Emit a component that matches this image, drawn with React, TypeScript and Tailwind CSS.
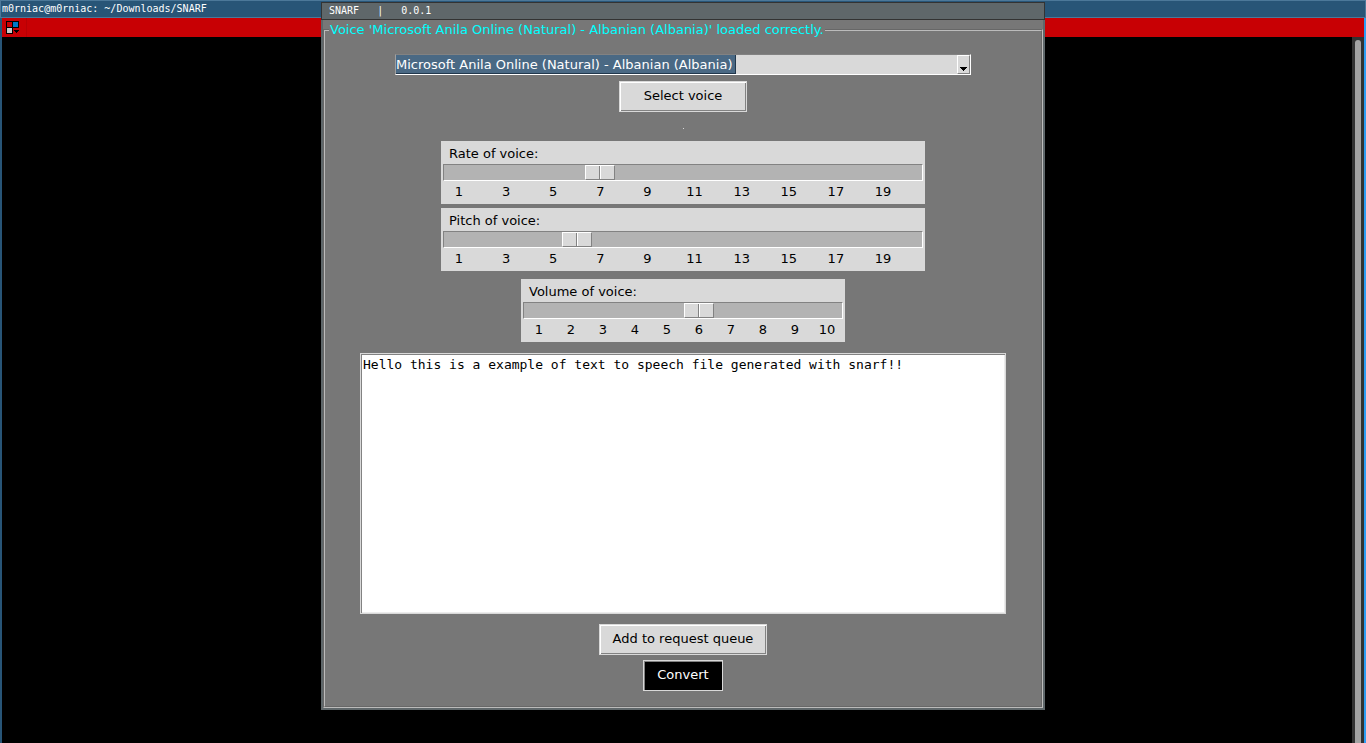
import { useState } from "react";
import type { ReactNode } from "react";

const VOICE = "Microsoft Anila Online (Natural) - Albanian (Albania)";

const RANGE =
  "block h-[17px] w-full appearance-none border border-t-[#828282] border-l-[#828282] border-r-white border-b-white bg-[#b3b3b3] outline-none " +
  "[&::-webkit-slider-thumb]:h-[15px] [&::-webkit-slider-thumb]:w-[30px] [&::-webkit-slider-thumb]:appearance-none [&::-webkit-slider-thumb]:rounded-none " +
  "[&::-webkit-slider-thumb]:border [&::-webkit-slider-thumb]:border-t-white [&::-webkit-slider-thumb]:border-l-white [&::-webkit-slider-thumb]:border-r-[#828282] [&::-webkit-slider-thumb]:border-b-[#828282] " +
  "[&::-webkit-slider-thumb]:bg-[linear-gradient(90deg,#d9d9d9_13px,#828282_13px,#828282_14px,#ffffff_14px,#ffffff_15px,#d9d9d9_15px)]";

type ScaleProps = {
  id: string;
  label: string;
  max: number;
  initial: number;
  ticks: number[];
  width: string;
  tickInset: string;
};

function Scale({ id, label, max, initial, ticks, width, tickInset }: ScaleProps) {
  const [value, setValue] = useState(initial);
  return (
    <div className={`h-[63px] bg-[#d9d9d9] px-0.5 ${width}`}>
      <label htmlFor={id} className="block h-[23px] px-1.5 leading-[26px]">
        {label}
      </label>
      <input
        id={id}
        type="range"
        min={1}
        max={max}
        value={value}
        onChange={(e) => setValue(Number(e.target.value))}
        className={RANGE}
      />
      <div className={`flex justify-between pl-4 leading-[22px] ${tickInset}`}>
        {ticks.map((t) => (
          <span key={t} className="flex w-0 justify-center">
            {t}
          </span>
        ))}
      </div>
    </div>
  );
}

type PushButtonProps = { children: ReactNode; tone: "light" | "dark"; wide?: boolean };

function PushButton({ children, tone, wide = false }: PushButtonProps) {
  const look =
    tone === "light"
      ? "bg-[#d9d9d9] text-black shadow-[inset_1px_1px_#ffffff,inset_-1px_-1px_#828282]"
      : "bg-black text-white shadow-[inset_1px_1px_#828282,inset_-1px_-1px_#000000]";
  return (
    <button
      type="button"
      className={`h-[31px] border border-[#d9d9d9] pb-0.5 ${wide ? "px-6" : "px-[13px]"} ${look}`}
    >
      {children}
    </button>
  );
}

function Terminal() {
  return (
    <div className="flex min-h-screen flex-col bg-black">
      <header className="h-[18px] border border-[#4c7899] bg-[#285577] pl-px font-['DejaVu_Sans_Mono',monospace] text-[10px] leading-[15px] text-white">
        m0rniac@m0rniac: ~/Downloads/SNARF
      </header>
      <div className="flex flex-1 flex-col border-r-2 border-l-2 border-r-[#2e9ef4] border-l-[#285577]">
        <div className="flex h-[19px] bg-[#c80004]">
          <button type="button" aria-label="New terminal layout" className="w-[25px] border-r border-[#b80004] pl-1">
            <svg width="13" height="13" viewBox="0 0 13 13" shapeRendering="crispEdges">
              <path d="M0 0h13v7H7v6H0z" fill="#000" />
              <path d="M1 1h5v5H1z" fill="#c80004" />
              <path d="M7 1h5v5H7z" fill="#0078c8" />
              <path d="M1 7h5v5H1z" fill="#c8c8c8" />
              <path d="M8 9h5v1h-1v1h-1v1h-1v-1H9v-1H8z" fill="#000" />
            </svg>
          </button>
        </div>
        <div className="flex flex-1 justify-end">
          <div className="flex w-3 flex-col bg-[#323232] px-[3px] pt-[3px]">
            <div className="flex-1 rounded-t-sm bg-[#a3a3a3]" />
          </div>
        </div>
      </div>
    </div>
  );
}

function SnarfWindow() {
  const [text, setText] = useState("Hello this is a example of text to speech file generated with snarf!!");
  const odd = [1, 3, 5, 7, 9, 11, 13, 15, 17, 19];
  const all = [1, 2, 3, 4, 5, 6, 7, 8, 9, 10];
  return (
    <section className="w-[724px] max-w-full bg-[#5f676a] font-['DejaVu_Sans',sans-serif] text-[13px] text-black">
      <h1 className="h-[18px] border border-[#333333] pl-[7px] font-['DejaVu_Sans_Mono',monospace] text-[10px] leading-4 font-normal whitespace-pre text-white">
        {"SNARF   |   0.0.1"}
      </h1>
      <div className="px-0.5 pb-0.5">
        <form className="bg-[#777777]" onSubmit={(e) => e.preventDefault()}>
          <fieldset className="min-w-0 border-2 border-[#bbbbbb] px-1 pb-[15px] [border-style:groove]">
            <legend className="h-[19px] px-px leading-[19px] text-[#00ffff]">
              Voice '{VOICE}' loaded correctly.
            </legend>
            <div className="flex flex-col items-center pt-[15px]">
              <div className="flex h-[21px] w-[576px] max-w-full border border-t-[#828282] border-r-white border-b-white border-l-[#a0a0a0] bg-[#d9d9d9]">
                <select
                  aria-label="Voice"
                  className="appearance-none border-r border-b border-[#21374c] bg-[#4a6984] pt-px pr-0.5 leading-[18px] text-white outline-none"
                >
                  <option>{VOICE}</option>
                </select>
                <span className="ml-auto flex w-[13px] items-end justify-center border border-t-white border-r-[#828282] border-b-[#828282] border-l-white pb-0.5">
                  <svg width="7" height="4" viewBox="0 0 7 4" shapeRendering="crispEdges">
                    <path d="M0 0h7v1H6v1H5v1H4v1H3V3H2V2H1V1H0z" fill="#000" />
                  </svg>
                </span>
              </div>
              <div className="mt-1.5 flex">
                <PushButton tone="light" wide>
                  Select voice
                </PushButton>
              </div>
              <div className="mt-4 size-px bg-[#d9d9d9]" />
              <div className="mt-3 flex flex-col gap-1">
                <Scale id="rate" label="Rate of voice:" max={20} initial={7} ticks={odd} width="w-[484px]" tickInset="pr-10" />
                <Scale id="pitch" label="Pitch of voice:" max={20} initial={6} ticks={odd} width="w-[484px]" tickInset="pr-10" />
              </div>
              <div className="mt-2">
                <Scale id="volume" label="Volume of voice:" max={10} initial={6} ticks={all} width="w-[324px]" tickInset="pr-4" />
              </div>
              <textarea
                aria-label="Text to convert"
                value={text}
                onChange={(e) => setText(e.target.value)}
                className="mt-[11px] block h-[261px] w-[646px] max-w-full resize-none border border-[#d9d9d9] bg-white px-0.5 py-[3px] font-['DejaVu_Sans_Mono',monospace] leading-[15px] shadow-[inset_1px_1px_#828282,inset_-1px_-1px_#ececec] outline-none"
              />
              <div className="mt-2.5 flex flex-col items-center gap-[5px]">
                <PushButton tone="light">Add to request queue</PushButton>
                <PushButton tone="dark">Convert</PushButton>
              </div>
            </div>
          </fieldset>
        </form>
      </div>
    </section>
  );
}

export default function App() {
  return (
    <main className="relative min-h-screen overflow-hidden">
      <Terminal />
      <div className="absolute inset-x-0 top-0.5 flex justify-center">
        <SnarfWindow />
      </div>
    </main>
  );
}
